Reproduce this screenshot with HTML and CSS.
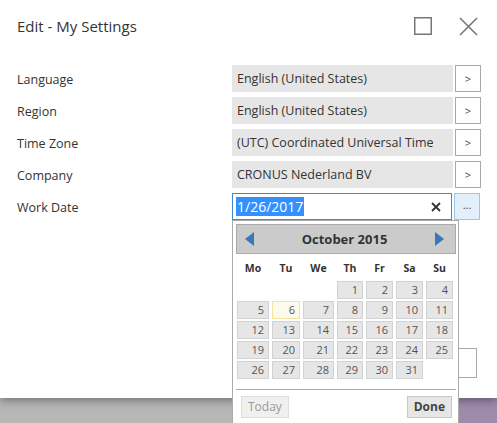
FILE: index.html
```html
<html>
<head>
	<meta http-equiv="content-type" content="text/html;charset=utf-8">
	<title>Edit - My Settings</title>
	<link rel="stylesheet" href="styles.css">
</head>
<body>
	<div class="dialog">
		<div class="titlebar">
			<span class="title">Edit - My Settings</span>
			<span class="winbtns">
				<svg class="max" width="18" height="18" viewBox="0 0 18 18"><rect x="0.75" y="0.75" width="16.5" height="16.5" fill="none" stroke="#777" stroke-width="1.5"/></svg>
				<svg class="close" width="19" height="19" viewBox="0 0 19 19"><path d="M1 1 L18 18 M18 1 L1 18" stroke="#777" stroke-width="1.6" fill="none"/></svg>
			</span>
		</div>

		<div class="form">
			<div class="row">
				<span class="label">Language</span>
				<div class="field">English (United States)</div>
				<span class="lookup">&gt;</span>
			</div>
			<div class="row">
				<span class="label">Region</span>
				<div class="field">English (United States)</div>
				<span class="lookup">&gt;</span>
			</div>
			<div class="row">
				<span class="label">Time Zone</span>
				<div class="field">(UTC) Coordinated Universal Time</div>
				<span class="lookup">&gt;</span>
			</div>
			<div class="row">
				<span class="label">Company</span>
				<div class="field">CRONUS Nederland BV</div>
				<span class="lookup">&gt;</span>
			</div>
			<div class="row">
				<span class="label">Work Date</span>
				<div class="field date">
					<span class="sel">1/26/2017</span>
					<svg class="clear" width="10" height="10" viewBox="0 0 10 10"><path d="M1 1 L9 9 M9 1 L1 9" stroke="#333" stroke-width="1.8" fill="none"/></svg>
				</div>
				<span class="lookup dots">...</span>
			</div>
		</div>

		<div class="footer">
			<span class="btn">OK</span>
			<span class="btn">Cancel</span>
		</div>
	</div>

	<div class="backdrop">
		<div class="page-gray"></div>
		<div class="page-purple"></div>
	</div>

	<div class="calendar">
		<div class="cal-head">
			<svg width="9" height="14" viewBox="0 0 9 14"><polygon points="0,7 9,0 9,14" fill="#3a78b8"/></svg>
			<span class="month">October 2015</span>
			<svg width="9" height="14" viewBox="0 0 9 14"><polygon points="9,7 0,0 0,14" fill="#3a78b8"/></svg>
		</div>
		<div class="cal-grid names">
			<span>Mo</span><span>Tu</span><span>We</span><span>Th</span><span>Fr</span><span>Sa</span><span>Su</span>
		</div>
		<div class="cal-grid days">
			<span class="empty"></span><span class="empty"></span><span class="empty"></span>
			<span class="day">1</span><span class="day">2</span><span class="day">3</span><span class="day">4</span>
			<span class="day">5</span><span class="day today">6</span><span class="day">7</span><span class="day">8</span><span class="day">9</span><span class="day">10</span><span class="day">11</span>
			<span class="day">12</span><span class="day">13</span><span class="day">14</span><span class="day">15</span><span class="day">16</span><span class="day">17</span><span class="day">18</span>
			<span class="day">19</span><span class="day">20</span><span class="day">21</span><span class="day">22</span><span class="day">23</span><span class="day">24</span><span class="day">25</span>
			<span class="day">26</span><span class="day">27</span><span class="day">28</span><span class="day">29</span><span class="day">30</span><span class="day">31</span>
		</div>
		<div class="cal-foot">
			<span class="cbtn today-btn">Today</span>
			<span class="cbtn done-btn">Done</span>
		</div>
	</div>
</body>
</html>
```

FILE: styles.css
```css
body{
	margin:0;
	padding:0;
	width:497px;
	height:423px;
	overflow:hidden;
	background:#b7b7b7;
	font-family:"Open Sans","Noto Sans",sans-serif;
	color:#333;
	position:relative;
}

.dialog{
	height:398px;
	background:white;
	display:flex;
	flex-direction:column;
	position:relative;
	z-index:2;
	box-shadow:0 3px 8px rgba(0,0,0,0.35);
}

.titlebar{
	height:52px;
	display:flex;
	align-items:center;
	justify-content:space-between;
	padding:0 19px 0 17px;
}
.title{
	font-size:15px;
	color:#333;
}
.winbtns{
	display:flex;
	align-items:center;
	gap:27px;
}

.form{
	padding-top:13px;
	display:flex;
	flex-direction:column;
	gap:5px;
}
.row{
	display:flex;
	align-items:center;
	height:27px;
	padding-left:17px;
	font-size:12.5px;
}
.label{
	width:215px;
	padding-top:1px;
}
.field{
	width:216px;
	height:27px;
	line-height:27px;
	padding-left:5px;
	background:#e6e6e6;
	white-space:nowrap;
	overflow:hidden;
}
.lookup{
	width:24px;
	height:25px;
	margin-left:2px;
	border:1px solid #a8a8a8;
	background:white;
	text-align:center;
	line-height:25px;
	font-size:11px;
	color:#444;
}

.field.date{
	width:215px;
	height:25px;
	padding-left:3px;
	padding-right:0;
	background:white;
	border:1px solid #3d8ad0;
	display:flex;
	align-items:center;
	justify-content:space-between;
}
.sel{
	background:#3390ff;
	color:white;
	font-size:14px;
	line-height:19px;
	padding:0 1px;
}
.clear{
	margin-right:10px;
}
.lookup.dots{
	background:#e3f0fb;
	border-color:#9ac7ec;
	line-height:22px;
}

.footer{
	margin-top:auto;
	padding:0 20px 20px 0;
	display:flex;
	justify-content:flex-end;
	gap:8px;
}
.btn{
	height:28px;
	line-height:28px;
	min-width:60px;
	padding:0 15px 0 14px;
	border:1px solid #a8a8a8;
	font-size:13px;
	text-align:center;
}

.backdrop{
	height:25px;
	display:flex;
}
.page-gray{
	width:459px;
	background:#b7b7b7;
}
.page-purple{
	flex:1;
	background:#9e8aab;
}

/* date picker popup */
.calendar{
	position:absolute;
	left:232px;
	top:220px;
	z-index:5;
	width:220px;
	height:210px;
	padding:3px 2px 0 3px;
	background:white;
	border:1px solid #aaa;
}
.cal-head{
	height:28px;
	background:#cbcbcb;
	border:1px solid #aaa;
	display:flex;
	align-items:center;
	justify-content:space-between;
	padding:0 11px 0 8px;
}
.month{
	font-weight:bold;
	font-size:13px;
	color:#333;
}
.cal-grid{
	display:grid;
	grid-template-columns:32px 28px 31px 26px 27px 27px 27px;
	column-gap:3px;
	margin-left:1px;
}
.names{
	margin-top:4px;
	height:20px;
	line-height:20px;
	font-size:10.5px;
	font-weight:bold;
	text-align:center;
}
.days{
	margin-top:3px;
	row-gap:2px;
}
.day{
	height:16px;
	line-height:16px;
	background:#e6e6e6;
	border:1px solid #d2d2d2;
	text-align:right;
	padding-right:4px;
	font-size:11px;
	color:#555;
}
.day.today{
	background:#fcfaeb;
	border-color:#f3e3a2;
}
.cal-foot{
	margin-top:10px;
	border-top:1px solid #aaa;
	padding:6px 4px 0 5px;
	display:flex;
	justify-content:space-between;
}
.cbtn{
	height:20px;
	line-height:20px;
	padding:0 6px;
	font-size:12px;
	border:1px solid #d2d2d2;
}
.today-btn{
	background:#f0f0f0;
	color:#999;
	border-color:#ddd;
}
.done-btn{
	background:#e6e6e6;
	font-weight:bold;
	color:#444;
	border-color:#c8c8c8;
}
```
